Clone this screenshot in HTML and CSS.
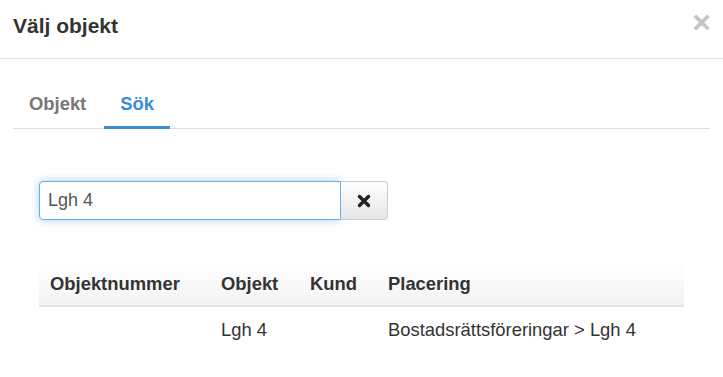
FILE: index.html
```html
<!DOCTYPE html>
<html lang="sv">
<head>
  <meta charset="UTF-8" />
  <title>Välj objekt</title>
  <link rel="stylesheet" href="styles.css">
</head>
<body>
  <div class="modal">
    <div class="modal-header">
      <h4>Välj objekt</h4>
      <span class="close">&times;</span>
    </div>

    <div class="modal-body">
      <ul class="tabs">
        <li>Objekt</li>
        <li class="active">Sök</li>
      </ul>

      <div class="search">
        <input type="text" value="Lgh 4" />
        <button type="button">
          <svg width="14" height="14" viewBox="0 0 14 14">
            <path d="M2.5 2.5 L11.5 11.5 M11.5 2.5 L2.5 11.5" stroke="#222" stroke-width="3.4" stroke-linecap="round" />
          </svg>
        </button>
      </div>

      <table>
        <thead>
          <tr>
            <th class="col-nr">Objektnummer</th>
            <th class="col-obj">Objekt</th>
            <th class="col-kund">Kund</th>
            <th>Placering</th>
          </tr>
        </thead>
        <tbody>
          <tr>
            <td></td>
            <td>Lgh 4</td>
            <td></td>
            <td>Bostadsrättsföreringar &gt; Lgh 4</td>
          </tr>
        </tbody>
      </table>
    </div>
  </div>
</body>
</html>
```

FILE: styles.css
```css
* {
  box-sizing: border-box;
}

body {
  margin: 0;
  background: #fff;
  color: #333;
  font-family: "Liberation Sans", Arial, sans-serif;
}

.modal-header {
  display: flex;
  justify-content: space-between;
  align-items: center;
  height: 59px;
  padding: 0 12px 0 13px;
  border-bottom: 1px solid #e5e5e5;
}

.modal-header h4 {
  margin: 0;
  font-size: 21px;
  font-weight: bold;
  margin-top: -6px;
}

.close {
  font-size: 32px;
  font-weight: bold;
  line-height: 1;
  color: #c4c4c4;
  margin-top: -14px;
}

.modal-body {
  padding: 26px 13px 0 13px;
}

.tabs {
  display: flex;
  list-style: none;
  margin: 0;
  padding: 0;
  border-bottom: 1px solid #ddd;
}

.tabs li {
  padding: 8px 16px 11px 16px;
  margin-right: 2px;
  font-size: 18.4px;
  font-weight: bold;
  color: #777;
  border-bottom: 3px solid transparent;
  margin-bottom: -1px;
}

.tabs li.active {
  color: #3a8dd6;
  border-bottom-color: #3a8dd6;
}

.search {
  display: flex;
  margin: 52px 0 0 26px;
}

.search input {
  width: 302px;
  height: 39px;
  padding: 0 8px;
  font-family: inherit;
  font-size: 18px;
  color: #555;
  border: 1px solid #66afe9;
  border-radius: 4px 0 0 4px;
  box-shadow: 0 0 8px rgba(102, 175, 233, 0.6);
  outline: none;
}

.search button {
  width: 47px;
  height: 39px;
  border: 1px solid #ccc;
  border-left: none;
  border-radius: 0 4px 4px 0;
  background: linear-gradient(#fff, #e6e6e6);
  display: flex;
  align-items: center;
  justify-content: center;
}

table {
  margin: 42px 0 0 26px;
  width: 645px;
  border-collapse: collapse;
  font-size: 18.4px;
}

th {
  text-align: left;
  font-weight: bold;
  height: 44px;
  padding: 0 11px;
  background: linear-gradient(#fff, #f3f3f3);
  border-bottom: 2px solid #e3e3e3;
}

td {
  height: 47px;
  padding: 0 11px;
}

.col-nr {
  width: 171px;
}

.col-obj {
  width: 89px;
}

.col-kund {
  width: 78px;
}
```
